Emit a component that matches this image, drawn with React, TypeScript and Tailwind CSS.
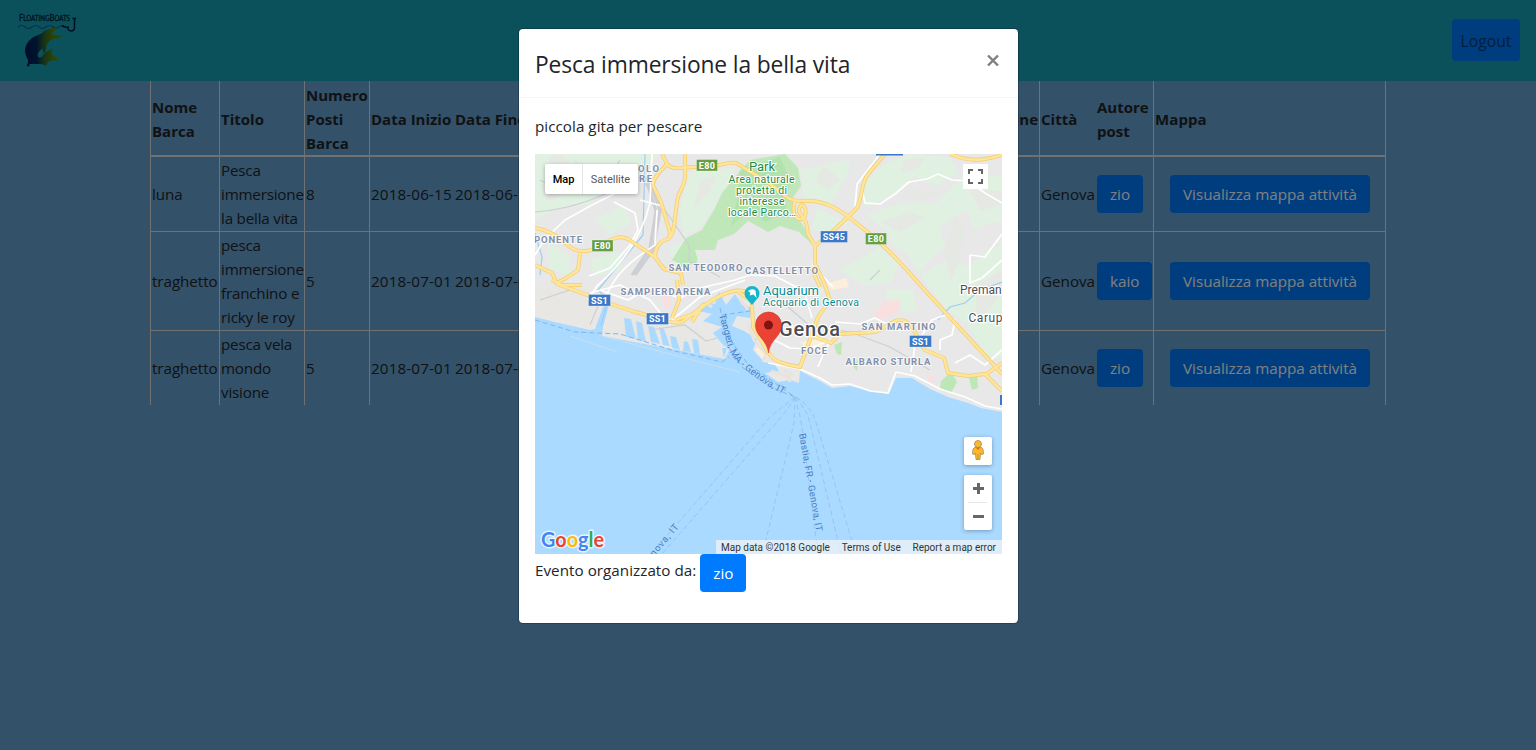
import React from "react";

const COLS =
  "grid w-[1236px] grid-cols-[69px_85px_65px_85px_85px_1fr_85px_57px_57px_233px]";
const UI = "font-['Open_Sans','Noto_Sans',sans-serif]";
const BTN =
  "h-[38px] rounded-[4px] bg-[#007bff] px-[13px] text-[15.2px] leading-[38px] text-white whitespace-nowrap";

type Row = {
  boat: string;
  title: string[];
  seats: string;
  start: string;
  end: string;
  author: string;
  height: string;
};

const rows: Row[] = [
  { boat: "luna", title: ["Pesca", "immersione", "la bella vita"], seats: "8", start: "2018-06-15", end: "2018-06-16", author: "zio", height: "h-[75px] border-b" },
  { boat: "traghetto", title: ["pesca", "immersione", "franchino e", "ricky le roy"], seats: "5", start: "2018-07-01", end: "2018-07-02", author: "kaio", height: "h-[99px] border-b" },
  { boat: "traghetto", title: ["pesca vela", "mondo", "visione"], seats: "5", start: "2018-07-01", end: "2018-07-02", author: "zio", height: "h-[74px]" },
];

function Cell({ children, line }: { children?: React.ReactNode; line?: boolean }) {
  return (
    <div className={"flex items-center whitespace-nowrap border-[#dee2e6] pl-px " + (line ? "border-l" : "")}>
      <div>{children}</div>
    </div>
  );
}

function Lines({ items }: { items: string[] }) {
  return (
    <>
      {items.map((t) => (
        <div key={t}>{t}</div>
      ))}
    </>
  );
}

function Logo() {
  return (
    <svg className="h-[60px] w-[60px]" viewBox="18 12 60 60">
      <defs>
        <linearGradient id="fish" x1="0" x2="1">
          <stop offset="0" stopColor="#001a50" />
          <stop offset=".3" stopColor="#00285c" />
          <stop offset=".52" stopColor="#2c6a30" />
          <stop offset=".75" stopColor="#5c8a00" />
          <stop offset="1" stopColor="#4f9400" />
        </linearGradient>
      </defs>
      <text x="19" y="22" fontSize="8.500" fontFamily="Lato, sans-serif" fill="#002440" stroke="#002440" strokeWidth=".3" textLength="51" lengthAdjust="spacingAndGlyphs">
        <tspan>F</tspan><tspan fontSize="7">LOATING</tspan><tspan>B</tspan><tspan fontSize="7">OATS</tspan>
      </text>
      <path d="M18 28q3.500-3 7 0t7 0 7 0 7 0 7 0 7-1l5 1" fill="none" stroke="#0e4f8c" strokeOpacity=".8" strokeWidth="1.100" />
      <path d="M62 26.500Q66 29 69 28M67.500 27.500Q68 32 71 32Q74.500 32 74.500 28V19M72.500 19.500H76" fill="none" stroke="#001a44" strokeWidth="1.500" />
      <path
        d="M57.500 28.300Q54 33 51.500 35Q57 37 62.500 36.200Q61 39.500 55 39.300Q49 40.500 46.500 46.500Q46.500 51 44.500 55Q42.500 53 42.500 49.500Q39 51.500 38 55Q37 59.500 42 58Q44 53 53 49.500Q50.500 54 53 56.500Q57.500 58 58 61.500Q51 60.500 47.500 63Q48 66 45 66.500Q43 64.500 39 65H31Q28.500 65 29.500 67.500L26.500 67Q29 63 27.500 60Q24 54 25.500 48Q28 40.500 35.500 37Q42 35 44 32Q49 30 57.500 28.300Z"
        fill="url(#fish)"
      />
    </svg>
  );
}

const yellow = [
  "M535 228C550 230 560 237 570 247C580 254 590 252 600 246C613 238 620 235 628 239L655 257",
  "M655 257C655 246 661 241 668 239C674 235 674 225 675 218L677 202C678 191 685 187 685 176V154",
  "M662 154L667 164C673 171 684 167 693 167H706C722 166 728 161 736 163L769 183C784 194 787 201 800 201C823 199 837 208 850 218C872 235 893 253 921 286L1002 374",
  "M667 164C660 172 652 179 653 185L661 202L670 232L669 239",
  "M535 265L552 273L557 284L582 293L608 303L635 312C655 316 668 325 682 322L698 310C713 299 730 288 744 291L752 303L753 327L768 352C775 364 790 365 800 367L807 348L818 317L830 300L823 280L815 264V246",
  "M580 254L578 270L566 278L557 283M552 280L562 285H582M655 257L664 269L681 273L683 285M677 280L679 300L672 318",
  "M810 335L831 343L840 334L875 332C888 327 895 317 905 321C917 328 917 342 925 350L944 358L948 373L968 376L985 374L1002 391",
  "M885 154L868 174C860 184 863 200 856 209L831 233L815 246",
  "M795 201C790 218 801 223 805 216C808 203 798 202 799 212L806 222L808 234L815 246M950 154C970 162 982 161 1002 155M985 375L1002 363M811 267L820 287M675 320L700 312M738 292L750 300M692 322L703 304",
];

const white = [
  "M652 154L650 203C643 232 626 261 597 286L588 300M657 210L655 245C640 255 620 268 609 290L600 305",
  "M535 255L544 240L565 220L592 205L622 190M614 202L635 213L638 230L630 245L610 268L589 276",
  "M880 154L857 184L855 208L826 238L815 247L813 266L833 287M862 190L865 203L880 204L895 194L909 182L927 179L938 174L952 180L968 181L985 193L1002 203",
  "M770 338L790 348L808 349L831 340M768 363L800 369L820 378L832 385L850 384L870 391L888 393L896 372L915 376L940 389L965 397L985 406L1002 409",
  "M640 200L662 206M600 290L628 300L650 288L680 298L700 288L735 280L750 275L775 276L804 291L812 318",
  "M818 367L825 350L831 340M911 372L915 345L922 335L932 320L945 315L955 320L952 335L940 340L940 350M1002 234L985 257L970 255L970 283L982 278L1002 260M955 363L970 355L985 365L1002 350",
  "M835 322L860 324L875 318L899 330L916 329M672 320L700 297L745 280M590 293L620 285L650 300L670 325",
];

function Shield({ x, y, w, label, green }: { x: number; y: number; w: number; label: string; green?: boolean }) {
  return (
    <g>
      <rect x={x - w / 2} y={y - 6} width={w} height="11.500" fill={green ? "#659f3f" : "#3b78c7"} stroke="#fff" strokeOpacity=".5" strokeWidth=".6" />
      <text x={x} y={y + 3.2} fill="#fff" fontSize="9" fontWeight="700" textAnchor="middle" letterSpacing=".3">
        {label}
      </text>
    </g>
  );
}

function Area({ x, y, w, children, size = 9.5 }: { x: number; y: number; w: number; children: string; size?: number }) {
  return (
    <text x={x} y={y} textLength={w} fontSize={size} fontWeight="700" fill="#8290ab" stroke="#fff" strokeWidth="2" strokeOpacity=".7" paintOrder="stroke">
      {children}
    </text>
  );
}

function MapDrawing() {
  return (
    <svg className="block h-[400px] w-[467px]" viewBox="535 154 467 400" fontFamily="Roboto, sans-serif">
      <rect x="535" y="154" width="467" height="400" fill="#aadaff" />
      <path
        d="M535 154H1002V412L981 408 968 403 948 397 930 389 912 378 896 378 889 394 870 391 850 386 832 388 820 381 800 371 799 383 790 380 778 382 765 373 779 371 774 364 764 362 753 350 757 339 744 331 732 326 737 316 750 318 752 308 742 305 735 294 726 305 719 292 715 304 703 302 699 311 712 314 703 321 722 327 713 333 724 346 730 348 725 359 602 336 603 327 610 301 606 299 595 329 590 330 555 322 535 317Z"
        fill="#e8e8e8"
      />
      <path d="M535 290L570 285 610 295 660 320 700 330 720 350 724 358 604 332 610 302 602 301 591 329 536 315Z" fill="#e9e7e3" />
      <g fill="#e0f1e1">
        <path d="M535 154H660L645 170 625 181 604 190 588 205 560 207 535 220ZM690 172L735 168 722 195 701 227 684 235 679 210ZM800 170L850 159 847 176 829 207 804 199ZM817 208L833 216 848 222 828 235 812 229Z" />
        <path d="M883 165L910 154 950 158 959 172 937 186 915 176 892 196 864 207 862 185ZM866 215L894 205 937 203 965 174 1002 176V220L974 229 967 209 939 227 945 247 929 261 919 273 905 251 893 246 887 231ZM920 275L950 258 967 267 987 250 1002 245V360L986 355 967 324 949 312Z" />
        <path d="M595 220L622 205 632 223 610 235ZM547 242L570 257 570 277 549 268ZM590 260L620 251 622 269 595 276ZM669 247L691 239 700 260 676 268ZM840 270L880 247 899 264 890 283 865 286ZM885 290L913 290 917 311 890 312Z" />
      </g>
      <g fill="#e5e8e3">
        <path d="M548 158L560 154 570 162 556 172ZM540 185L556 180 566 192 548 202ZM575 160L600 168 586 185 566 177ZM823 165L840 180 829 190 816 182ZM910 190L938 192 925 200 901 198ZM955 215L965 230 960 260 951 280 944 250ZM976 285L1002 270V292L977 325ZM970 190L1002 191V204L980 211ZM700 180L716 176 710 192 694 208ZM905 160L925 158 918 168 900 174ZM880 222L910 212 925 218 900 232Z" />
      </g>
      <path
        d="M672 260L686 238 702 230 714 210 722 193 735 177 750 160 785 154 798 168 801 186 792 199 796 214 808 234 815 247 799 232 780 226 768 232 748 221 734 234 718 240 715 250 695 250 698 260 682 265Z"
        fill="#bfe7b9"
      />
      <path d="M740 170L780 157 790 180 785 212 765 222 751 208 731 226 738 196Z" fill="#b2e2ae" />
      <path d="M941 381L951 372 957 382 951 393 940 389ZM969 378L977 374 978 388 972 390ZM852 365L858 360 857 371ZM834 345L842 342 841 355 837 354ZM681 253L694 247 697 263 681 267Z" fill="#bde7b6" />
      <path d="M875 312L885 301 899 300 900 311 887 318 875 320ZM659 288L669 289 671 306 665 309ZM925 372L935 378 930 385Z" fill="#f9dfe0" />
      <path d="M826 284L846 278 849 287 832 290ZM800 342L824 338 821 354 812 353ZM755 350L760 345 768 355 765 362Z" fill="#fcefdb" />
      <g fill="#aadaff">
        <path d="M624 318L631 319 636 339 626 337ZM636 321L642 323 646 342 638 340ZM648 326L654 327 660 344 651 342ZM659 327L664 329 670 346 663 345ZM670 336L676 337 680 350 672 348ZM684 341L688 342 691 352 683 351ZM692 339L698 340 700 354 694 353ZM722 348L727 348 724 358Z" />
      </g>
      <path d="M748 325L754 340 766 354 763 362M771 371L789 377 790 382M784 370L794 376M712 307L704 302M739 297L748 310" stroke="#e8e3dc" strokeWidth="3" fill="none" />
      <g fill="none" stroke="#cdcfd4" strokeWidth="1.200">
        <path d="M535 212C580 209 615 190 640 177L667 213L689 245L689 260L720 277M540 300L570 290 600 301 590 325M650 330L685 325 706 341 717 338M780 300L810 326 850 332 890 347 930 370M540 180L560 190 580 185M880 270L870 280M620 160L610 175 617 190" />
        <path d="M645 176L656 211 650 248 632 275M648 176L660 211 653 250 635 275" strokeWidth="3" />
      </g>
      <path d="M645 154L643 235 621 262 598 290 608 300 601 326M535 233L542 257 540 275M1002 282L980 290 965 303 950 307 938 320" fill="none" stroke="#9fceef" strokeWidth="1.200" />
      <g fill="none" stroke="#fff" strokeWidth="1.700" strokeLinejoin="round">
        {white.map((d) => (
          <path key={d} d={d} />
        ))}
      </g>
      <g fill="none" stroke="#f3cd6c" strokeWidth="3.900" strokeLinejoin="round">
        {yellow.map((d) => (
          <path key={d} d={d} />
        ))}
      </g>
      <g fill="none" stroke="#ffe59a" strokeWidth="2.500" strokeLinejoin="round">
        {yellow.map((d) => (
          <path key={d} d={d} />
        ))}
      </g>
      <path d="M602 336L700 362 740 372M570 336L617 352" fill="none" stroke="#cbe0ee" strokeWidth="1" />
      <g fill="none" stroke="#86b3ea" strokeWidth="1" strokeDasharray="5 3">
        <path d="M535 320L575 332 620 334 675 351 722 362 729 357M720 308L728 347 742 367 768 386 795 397M724 316L733 344 747 363 775 383 795 397M722 315L750 311" />
      </g>
      <g fill="none" stroke="#96bff0" strokeWidth=".9" strokeDasharray="5 3">
        <path d="M795 397Q785 405 770 417L651 554M795 397Q788 410 770 430L662 554M795 397L794 422 791 436 764 548M795 397L801 420 818 554M796 397L808 415 841 554M796 397Q810 406 815 419L856 554" />
      </g>
      <path id="tangeri" d="M719 315L728 347Q733 360 742 367L768 386 792 399" fill="none" />
      <g fill="#4a80c4" fontSize="9.500">
        <text><textPath href="#tangeri" textLength="107">Tangeri, MA - Genova, IT</textPath></text>
        <text transform="translate(799 434) rotate(80)" textLength="99">Bastia, FR - Genova, IT</text>
        <text transform="translate(654 557) rotate(-50)" textLength="39">nova, IT</text>
      </g>
      <Shield x={707} y={165.500} w={21} label="E80" green />
      <Shield x={602.500} y={246} w={21} label="E80" green />
      <Shield x={876} y={239} w={21} label="E80" green />
      <Shield x={834} y={237} w={27} label="SS45" />
      <Shield x={599.500} y={300.500} w={22} label="SS1" />
      <Shield x={657.500} y={319} w={22} label="SS1" />
      <Shield x={920.500} y={341.500} w={22} label="SS1" />
      <path d="M876 154H903V155.500H876ZM1000 395H1002V405H1000Z" fill="#3b78c7" />
      <Area x={638} y={172} w={21}>OLO</Area>
      <Area x={639} y={182} w={13}>RE</Area>
      <Area x={534} y={242.500} w={48}>PONENTE</Area>
      <Area x={668.500} y={270.500} w={74}>SAN TEODORO</Area>
      <Area x={745} y={273.500} w={73}>CASTELLETTO</Area>
      <Area x={620.500} y={295} w={90}>SAMPIERDARENA</Area>
      <Area x={861.500} y={330} w={74}>SAN MARTINO</Area>
      <Area x={801} y={354} w={26}>FOCE</Area>
      <Area x={845.500} y={364.500} w={41}>ALBARO</Area>
      <Area x={890.500} y={364.500} w={40}>STURLA</Area>
      <g fill="#0b8a8f" stroke="#fff" strokeWidth="2" paintOrder="stroke">
        <text x="763" y="295" fontSize="13" textLength="56">Aquarium</text>
        <text x="763" y="306" fontSize="10.500" textLength="96">Acquario di Genova</text>
      </g>
      <g fill="#258a3b" stroke="#fff" strokeWidth="2" paintOrder="stroke" textAnchor="middle" fontSize="10.500">
        <text x="762" y="171" fontSize="13">Park</text>
        <text x="761.500" y="183" textLength="66">Area naturale</text>
        <text x="761.500" y="194" textLength="51">protetta di</text>
        <text x="762" y="205" textLength="45">interesse</text>
        <text x="762" y="216" textLength="68">locale Parco…</text>
      </g>
      <g fill="#4b4f55" stroke="#fff" strokeWidth="2.500" paintOrder="stroke">
        <text x="960" y="294" fontSize="12">Preman</text>
        <text x="968.500" y="322" fontSize="12" textLength="34">Carup</text>
        <text x="779" y="336" fontSize="20" fontWeight="500" textLength="61">Genoa</text>
      </g>
      <path d="M752 305L747 299A7.500 7.500 0 1 1 757 299Z" fill="#12b5cb" />
      <path d="M748 291Q752 288 755.500 290.500L756.500 298 753.500 294.500 749.500 295.500 750.500 293Z" fill="#fff" />
      <path d="M768.500 353C767 339 755.500 337 755.500 325A13 13 0 0 1 781.500 325C781.500 337 770 339 768.500 353Z" fill="#ea4335" stroke="#c5352b" strokeWidth=".6" />
      <circle cx="768.500" cy="325" r="4.500" fill="#811411" />
      <text x="541" y="547" fontFamily="Lato, sans-serif" fontSize="21" textLength="63" lengthAdjust="spacingAndGlyphs" stroke="#fff" strokeWidth="3" strokeOpacity=".75" strokeLinejoin="round" paintOrder="stroke" fontWeight="700">
        <tspan fill="#4285f4">G</tspan><tspan fill="#ea4335">o</tspan><tspan fill="#fbbc05">o</tspan><tspan fill="#4285f4">g</tspan><tspan fill="#34a853">l</tspan><tspan fill="#ea4335">e</tspan>
      </text>
    </svg>
  );
}

function MapPanel() {
  return (
    <div className="relative h-[400px] w-[467px] overflow-hidden font-[Roboto,sans-serif]">
      <MapDrawing />
      <div className="absolute left-[10px] top-[10px] flex h-[30px] rounded-[2px] bg-white text-[11px] leading-[31px] shadow-[0_1px_4px_rgba(0,0,0,0.3)]">
        <div className="w-[38px] border-r border-[#e6e6e6] text-center font-medium text-black">Map</div>
        <div className="w-[55px] text-center text-[#565656]">Satellite</div>
      </div>
      <div className="absolute left-[428px] top-[10px] flex h-[25px] w-[25px] items-center justify-center bg-white">
        <svg className="h-[15px] w-[15px]" viewBox="0 0 15 15" fill="none" stroke="#666" strokeWidth="2">
          <path d="M1 5V1H5M10 1H14V5M14 10V14H10M5 14H1V10" />
        </svg>
      </div>
      <div className="absolute left-[429px] top-[283px] flex h-[28px] w-[28px] items-start justify-center rounded-[2px] bg-white pt-[3px] shadow-[0_1px_4px_rgba(0,0,0,0.3)]">
        <svg className="h-[20px] w-[14px]" viewBox="0 0 14 20">
          <path d="M4 7L2 9 1.500 14 3.500 14.500 4.500 13 5 19.500H9L9.500 13 10.500 14.500 12.500 14 12 9 10 7Z" fill="#fbb829" stroke="#a98a5c" strokeWidth=".8" />
          <circle cx="7" cy="4" r="3.500" fill="#fbb829" stroke="#a98a5c" strokeWidth=".8" />
          <path d="M4.500 7.500H9.500L7 10Z" fill="#e5701e" />
          <path d="M7 14V19" stroke="#c98a1a" strokeWidth=".8" />
        </svg>
      </div>
      <div className="absolute left-[429px] top-[321px] flex h-[55px] w-[28px] items-center justify-center rounded-[2px] bg-white shadow-[0_1px_4px_rgba(0,0,0,0.3)]">
        <svg className="h-[55px] w-[28px]" viewBox="0 0 28 55">
          <path d="M9 13.500H20M14.500 8V19M9 41.500H20" stroke="#666" strokeWidth="3" />
          <path d="M4 27.500H23" stroke="#e6e6e6" />
        </svg>
      </div>
      <div className="absolute bottom-0 right-0 flex h-[14px] w-[286px] justify-between whitespace-nowrap bg-[#f5f5f5]/70 pl-[5px] pr-[6px] text-[10px] leading-[15px] text-[#333]">
        <span>Map data ©2018 Google</span>
        <span>Terms of Use</span>
        <span>Report a map error</span>
      </div>
    </div>
  );
}

export default function App() {
  return (
    <div className={"relative h-[750px] w-[1536px] overflow-hidden bg-[#66a3d2] text-[15.2px] leading-6 text-[#212529] " + UI}>
      <header className="flex h-[81px] items-center justify-between bg-[#17a2b8] pl-[18px] pr-[16px]">
        <Logo />
        <button className="mb-px h-[42px] w-[68px] rounded-[4px] bg-[#007bff] pt-[2px] text-[15.7px] text-[#003e80]">Logout</button>
      </header>

      <main className="flex justify-center">
        <div className="border-r border-[#dee2e6]">
          <div className={COLS + " -mr-px h-[76px] border-b-2 border-[#dee2e6] text-[15px] font-bold"}>
            <Cell line><div className="pt-[2px]"><Lines items={["Nome", "Barca"]} /></div></Cell>
            <Cell line><div className="pt-[2px]">Titolo</div></Cell>
            <Cell line><div className="pt-[2px]"><Lines items={["Numero", "Posti", "Barca"]} /></div></Cell>
            <Cell line><div className="pt-[2px]">Data Inizio</div></Cell>
            <Cell><div className="pt-[2px]">Data Fine</div></Cell>
            <Cell />
            <div className="flex items-center justify-end whitespace-nowrap pr-px pt-[2px]">Ora Fine</div>
            <Cell line><div className="pt-[2px]">Città</div></Cell>
            <Cell><div className="pt-[2px]"><Lines items={["Autore", "post"]} /></div></Cell>
            <Cell line><div className="pt-[2px] tracking-[0.1px]">Mappa</div></Cell>
          </div>
          {rows.map((r) => (
            <div key={r.title.join(" ")} className={COLS + " -mr-px border-[#dee2e6] " + r.height}>
              <Cell line><div className="tracking-[-0.05px]">{r.boat}</div></Cell>
              <Cell line><div className="tracking-[-0.2px]"><Lines items={r.title} /></div></Cell>
              <Cell line>{r.seats}</Cell>
              <Cell line><div className="tracking-[0.15px]">{r.start}</div></Cell>
              <Cell><div className="tracking-[0.15px]">{r.end}</div></Cell>
              <Cell />
              <Cell />
              <Cell line>Genova</Cell>
              <Cell><button className={BTN}>{r.author}</button></Cell>
              <div className="flex items-center justify-center border-l border-[#dee2e6]">
                <button className={BTN + " w-[200px]"}>Visualizza mappa attività</button>
              </div>
            </div>
          ))}
        </div>
      </main>

      <div className="absolute inset-0 flex items-start justify-center bg-black/50 pl-px pt-[28px]">
        <section className="h-[596px] w-[501px] rounded-[5px] border border-black/20 bg-white bg-clip-padding">
          <div className="flex h-[69px] items-start justify-between border-b border-[#f5f5f5] pl-[16px] pr-[18px] pt-[18px]">
            <h4 className="text-[22.8px] leading-9 tracking-[-0.13px]">Pesca immersione la bella vita</h4>
            <button className="mt-[7px] flex h-[12px] w-[14px] items-center justify-center">
              <svg className="h-[11px] w-[12px]" viewBox="0 0 12 11" stroke="#808080" strokeWidth="2.400">
                <path d="M1 .5L11 10.500M11 .5L1 10.500" />
              </svg>
            </button>
          </div>
          <div className="px-[16px] pt-[16px]">
            <p className="mb-[16px] tracking-[0.04px]">piccola gita per pescare</p>
            <MapPanel />
            <div className="flex items-start">
              <span className="mr-[4px] mt-[4px] tracking-[0.04px]">Evento organizzato da:</span>
              <button className={BTN}>zio</button>
            </div>
          </div>
        </section>
      </div>
    </div>
  );
}
